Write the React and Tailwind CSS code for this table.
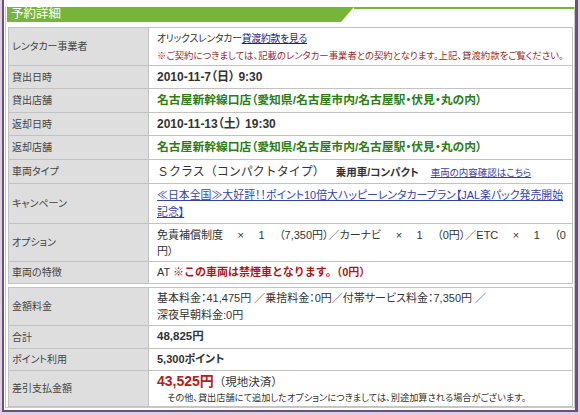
// 予約詳細 — reservation detail card (rental car)

function Row({ h, label, children, className = '' }) {
  return (
    <div className={`flex border-b border-[#c2c2c2] ${h}`}>
      <div className="flex w-[140px] shrink-0 items-center border-r border-[#c2c2c2] bg-[#dedede] pl-[3px] text-[10px] text-[#444]">
        {label}
      </div>
      <div className={`flex min-w-0 flex-1 flex-col justify-center pl-[8px] pr-[6px] text-[#333] ${className}`}>
        {children}
      </div>
    </div>
  )
}

export default function App() {
  const options = ['免責補償制度', '×', '1', '（7,350円）／カーナビ', '×', '1', '（0円）／ETC', '×', '1', '（0']

  return (
    <div className="h-[415px] w-[580px] bg-[#dccfe2] px-[2px] pb-[3px] font-['Liberation_Sans','Noto_Sans_CJK_JP',sans-serif] [font-feature-settings:'palt']">
      <div className="h-full border-b-2 border-l-2 border-r-[3px] border-[#6b4f7c] bg-white pt-[7px]">
        <div className="ml-[1px] border-x border-b border-[#c9c9c9]">
          {/* header tab + thin green rule */}
          <div className="flex h-[15px]">
            <div className="ml-[1px] flex w-[347px] items-center bg-[#76b53a] pl-[4px] text-[12.5px] text-white [clip-path:polygon(0_0,100%_0,calc(100%-13px)_100%,0_100%)]">
              予約詳細
            </div>
            <div className="flex-1 border-t-2 border-[#76b53a]" />
          </div>

          <div className="mt-[5px] pl-[2px] pr-[1px]">
            <div className="border-x border-t border-[#c2c2c2]">
              <Row h="h-[38px]" label="レンタカー事業者" className="gap-[5px]">
                <div className="text-[9.8px] leading-[13px] tracking-[-0.2px]">
                  オリックスレンタカー
                  <span className="text-[#1c2584] underline">貸渡約款を見る</span>
                </div>
                <div className="text-[9.4px] leading-[12px] text-[#9b2b2b]">
                  ※ご契約につきましては、記載のレンタカー事業者との契約となります。上記、貸渡約款をご覧ください。
                </div>
              </Row>
              <Row h="h-[23px]" label="貸出日時">
                <div className="text-[12px] font-bold">2010-11-7（日） 9:30</div>
              </Row>
              <Row h="h-[24px]" label="貸出店舗">
                <div className="text-[11.8px] font-bold text-[#2d7d14]">
                  名古屋新幹線口店（愛知県/名古屋市内/名古屋駅・伏見・丸の内）
                </div>
              </Row>
              <Row h="h-[23px]" label="返却日時">
                <div className="text-[12px] font-bold">2010-11-13（土） 19:30</div>
              </Row>
              <Row h="h-[24px]" label="返却店舗">
                <div className="text-[11.8px] font-bold text-[#2d7d14]">
                  名古屋新幹線口店（愛知県/名古屋市内/名古屋駅・伏見・丸の内）
                </div>
              </Row>
              <Row h="h-[24px]" label="車両タイプ">
                <div className="flex items-baseline">
                  <span className="text-[12px] [font-feature-settings:normal]">Ｓクラス（コンパクトタイプ）</span>
                  <span className="ml-[11px] text-[10.5px] font-semibold">乗用車/コンパクト</span>
                  <span className="ml-[12px] text-[9.5px] text-[#3443a8] underline">車両の内容確認はこちら</span>
                </div>
              </Row>
              <Row h="h-[40px]" label="キャンペーン">
                <div className="text-[10.9px] leading-[17px] text-[#3443a8] underline">
                  ≪日本全国≫大好評！！ポイント10倍大ハッピーレンタカープラン【JAL楽パック発売開始
                  <br />
                  記念】
                </div>
              </Row>
              <Row h="h-[38px]" label="オプション">
                <div className="flex justify-between text-[11px] leading-[16px]">
                  {options.map((t, i) => (
                    <span key={i}>{t}</span>
                  ))}
                </div>
                <div className="text-[11px] leading-[16px]">円）</div>
              </Row>
              <Row h="h-[22px]" label="車両の特徴">
                <div className="text-[11px] [font-feature-settings:normal]">
                  AT <span className="font-bold text-[#b01818]">※この車両は禁煙車となります。（0円）</span>
                </div>
              </Row>
            </div>

            <div className="mt-[3px] border-x border-t border-[#c2c2c2]">
              <Row h="h-[38px]" label="金額料金">
                <div className="text-[11px] leading-[17px]">
                  基本料金：41,475円 ／乗捨料金：0円／付帯サービス料金：7,350円 ／
                  <br />
                  深夜早朝料金:0円
                </div>
              </Row>
              <Row h="h-[23px]" label="合計">
                <div className="text-[11.5px] font-bold">48,825円</div>
              </Row>
              <Row h="h-[22px]" label="ポイント利用">
                <div className="text-[11px] font-bold">5,300ポイント</div>
              </Row>
              <Row h="h-[36px]" label="差引支払金額">
                <div className="flex items-baseline leading-[18px]">
                  <span className="text-[14px] font-bold text-[#b02020]">43,525円</span>
                  <span className="text-[11.5px] [font-feature-settings:normal]">（現地決済）</span>
                </div>
                <div className="pl-[10px] text-[9.2px] leading-[14px]">
                  その他、貸出店舗にて追加したオプションにつきましては、別途加算される場合がございます。
                </div>
              </Row>
            </div>
          </div>
        </div>
      </div>
    </div>
  )
}
